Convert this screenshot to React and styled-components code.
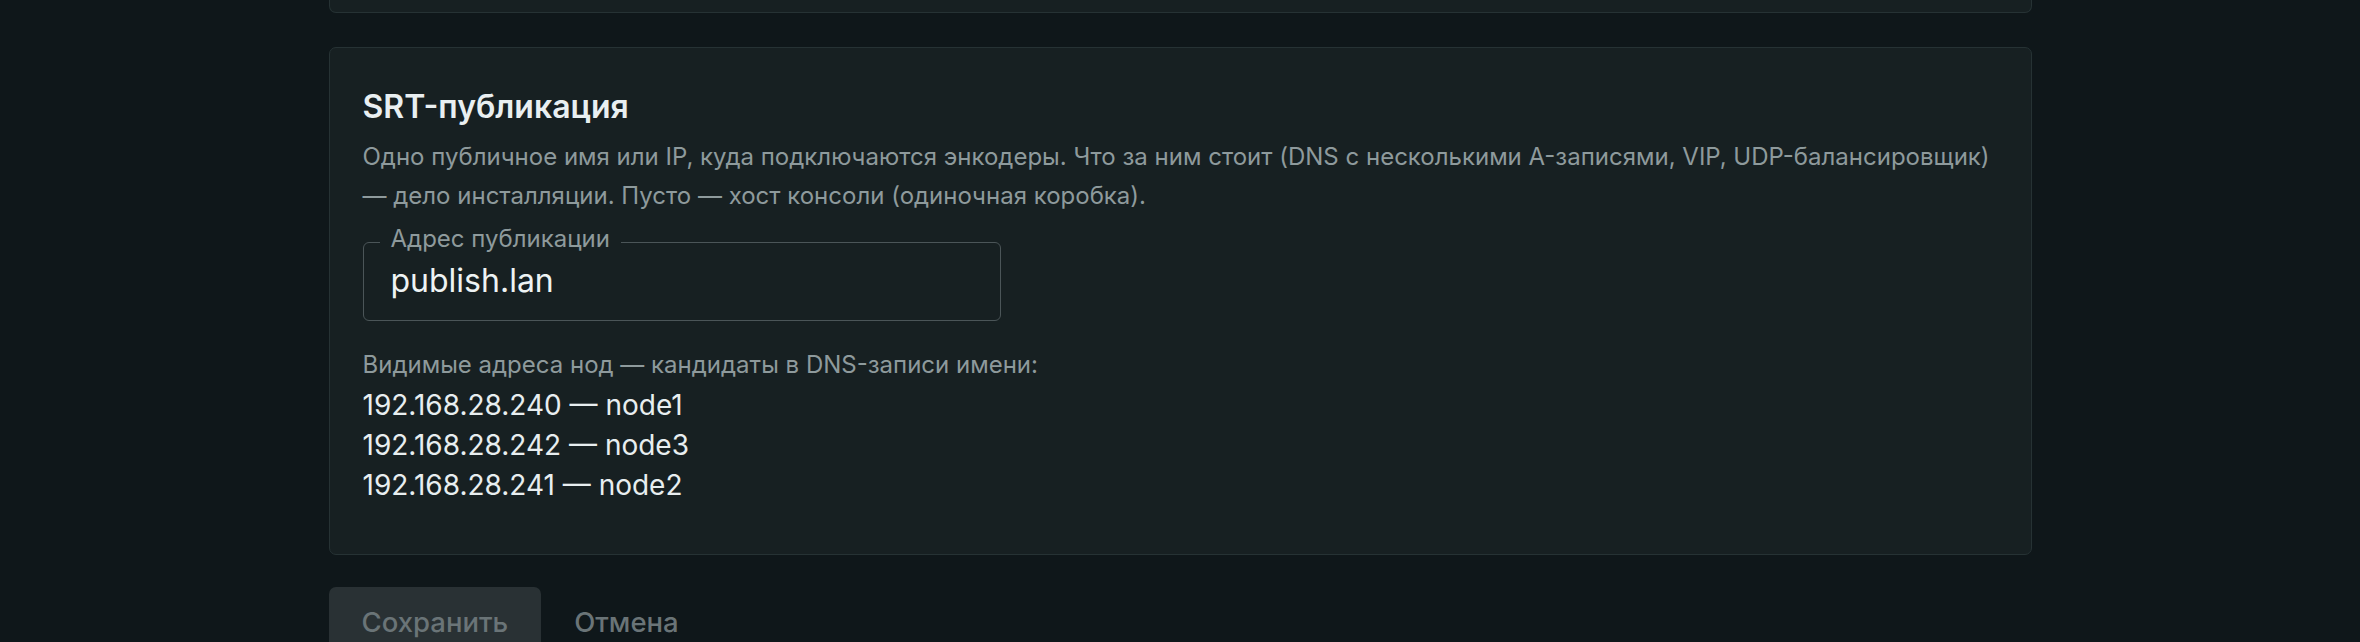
import React from 'react';
import styled, { createGlobalStyle } from 'styled-components';

const GlobalStyle = createGlobalStyle`
  html, body {
    margin: 0;
    padding: 0;
    background: #0f171a;
    font-family: Inter, "Noto Sans", "Liberation Sans", sans-serif;
    color: #e8eef0;
  }
  * {
    box-sizing: border-box;
  }
`;

const Page = styled.div`
  width: 1703px;
  margin: 0 auto;
  display: flex;
  flex-direction: column;
  gap: 32.5px;
`;

const Card = styled.section`
  background: #172022;
  border: 1.5px solid #263234;
  border-radius: 7px;
  padding: 40px 33px 49px;
  display: flex;
  flex-direction: column;
  align-items: flex-start;

  ${({ $stub }) => $stub && `
    height: 13px;
    margin-bottom: 1.5px;
    padding: 0;
    border-top: none;
    border-top-left-radius: 0;
    border-top-right-radius: 0;
  `}
`;

const Title = styled.h2`
  margin: 0;
  font-size: 32px;
  line-height: 38px;
  font-weight: 600;
  color: #e9eff1;
`;

const Description = styled.p`
  margin: 10.5px 0 0;
  font-size: 24px;
  line-height: 39px;
  color: #8e9a9c;
`;

const Field = styled.fieldset`
  margin: 12.5px 0 0;
  width: 638px;
  padding: 0 16px 19.5px;
  border: 1.5px solid #4b5558;
  border-radius: 6px;
`;

const Legend = styled.legend`
  padding: 0 11px 6px;
  font-size: 24px;
  line-height: 24px;
  color: #8e9a9c;
`;

const Input = styled.input`
  display: block;
  width: 100%;
  margin-top: 3.5px;
  padding: 0 11px;
  border: none;
  outline: none;
  background: transparent;
  font-family: inherit;
  font-size: 32px;
  line-height: 40px;
  height: 40px;
  color: #eef3f4;
`;

const Hint = styled.div`
  margin-top: 28px;
  font-size: 24px;
  line-height: 31px;
  color: #8e9a9c;
`;

const NodeList = styled.ul`
  margin: 4.5px 0 0;
  padding: 0;
  list-style: none;
`;

const NodeItem = styled.li`
  font-size: 28px;
  line-height: 40px;
  color: #e8eef0;
`;

const Actions = styled.div`
  display: flex;
  align-items: center;
`;

const Button = styled.button`
  font-family: inherit;
  font-size: 27.5px;
  font-weight: 500;
  line-height: 40px;
  padding: 15px 33px;
  border: none;
  border-radius: 7px;
  cursor: pointer;
  background: ${({ $primary }) => ($primary ? '#293134' : 'transparent')};
  color: #6a7477;

  &:disabled {
    cursor: not-allowed;
  }
`;

const nodes = [
  { ip: '192.168.28.240', name: 'node1' },
  { ip: '192.168.28.242', name: 'node3' },
  { ip: '192.168.28.241', name: 'node2' },
];

export default function App() {
  return (
    <>
      <GlobalStyle />
      <Page>
        <Card $stub />
        <Card>
          <Title>SRT-публикация</Title>
          <Description>
            Одно публичное имя или IP, куда подключаются энкодеры. Что за ним стоит (DNS с несколькими A-записями, VIP, UDP-балансировщик)
            {' '}— дело инсталляции. Пусто — хост консоли (одиночная коробка).
          </Description>
          <Field>
            <Legend>Адрес публикации</Legend>
            <Input defaultValue="publish.lan" />
          </Field>
          <Hint>Видимые адреса нод — кандидаты в DNS-записи имени:</Hint>
          <NodeList>
            {nodes.map((n) => (
              <NodeItem key={n.ip}>
                {n.ip} — {n.name}
              </NodeItem>
            ))}
          </NodeList>
        </Card>
        <Actions>
          <Button $primary disabled>Сохранить</Button>
          <Button>Отмена</Button>
        </Actions>
      </Page>
    </>
  );
}
